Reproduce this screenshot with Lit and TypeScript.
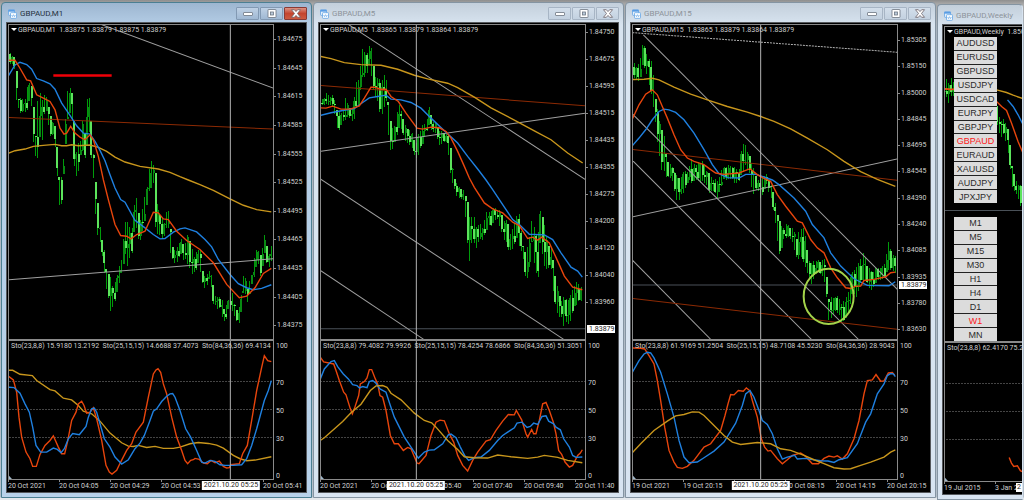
import { LitElement, html, svg, css, nothing } from "lit";
import { customElement, property } from "lit/decorators.js";
import { classMap } from "lit/directives/class-map.js";

type Line = { tone: string; pts: string };

interface Chart {
  title: string;
  quote: string;
  active?: boolean;
  partial?: boolean;
  left: number; // screen x that candle positions are counted from
  view: string; // price pane coordinates, three units to a pixel
  subView: string;
  candles: number[]; // x, high, low triples
  lines: Line[];
  studies: Line[];
  stochastic: string;
  prices: string[];
  pricePad: [number, number];
  last?: { value: string; at: number };
  dates: string[];
  cross?: { x: number; label: string };
  circle?: boolean;
}

const M1: Chart = {
  title: "GBPAUD,M1",
  quote: "1.83875 1.83879 1.83875 1.83879",
  active: true,
  left: 0,
  view: "27 75 792 945",
  subView: "27 21 792 414",
  candles: [
    8,41,68, 10,52,65, 13,56,65, 15,57,74, 17,73,107, 19,102,109, 21,98,115, 24,99,114, 26,96,110, 28,82,112, 30,81,100,
    32,84,114, 34,112,148, 36,137,158, 38,92,166, 40,93,145, 42,98,143, 44,92,117, 46,95,108, 48,103,126, 50,110,135,
    52,118,138, 54,126,133, 56,124,163, 58,155,195, 60,188,210, 62,172,205, 64,153,170, 66,115,146, 68,88,118, 70,84,115,
    72,93,112, 73,93,160, 75,130,182, 77,155,174, 79,140,172, 81,140,155, 83,115,158, 85,135,158, 87,97,150, 89,90,130,
    90,98,150, 92,130,170, 94,158,181, 96,180,222, 98,205,240, 100,226,245, 102,238,255, 104,247,272, 106,268,289,
    108,270,300, 110,272,312, 112,287,310, 114,283,306, 116,276,302, 118,276,290, 120,260,280, 122,258,272, 124,234,266,
    126,217,260, 128,217,267, 130,228,260, 132,228,258, 134,202,240, 136,196,225, 138,210,240, 140,218,245, 142,215,240,
    144,202,228, 146,190,215, 148,180,200, 150,163,190, 152,158,195, 154,165,180, 156,175,240, 158,205,238, 160,212,240,
    162,218,238, 164,224,238, 166,210,232, 168,208,225, 170,220,250, 172,244,260, 174,247,262, 176,255,269, 178,238,262,
    180,243,255, 182,238,256, 184,245,265, 186,240,262, 188,235,265, 190,240,270, 192,245,278, 194,258,276, 196,252,272,
    198,250,262, 200,243,270, 202,268,285, 204,275,288, 206,276,290, 208,273,282, 210,270,280, 212,275,296, 214,290,308,
    216,298,306, 218,295,312, 220,298,310, 222,300,318, 224,308,322, 226,306,323, 228,301,312, 230,298,310, 232,290,310,
    234,300,316, 236,308,322, 238,310,326, 240,305,322, 242,288,308, 244,268,290, 246,282,300, 248,290,303, 250,278,295,
    252,275,285, 254,258,282, 256,248,268, 258,250,262, 260,256,278, 262,250,280, 264,235,250, 266,235,260, 268,256,270,
    270,250,268, 272,244,262,
  ],
  lines: [
    { tone: "trend", pts: "300,72 820,265" },
    { tone: "trend", pts: "25,841 820,778" },
    { tone: "rust", pts: "25,353 820,388" },
    { tone: "gold", pts: "25,461 45,453 75,448 100,440 130,437 165,434 185,438 200,438 215,435 235,438 270,436 295,443 320,455 345,472 375,487 420,500 475,508 510,518 540,531 565,541 600,555 640,572 690,598 730,617 770,630 814,637" },
    { tone: "blue", pts: "25,228 45,195 60,187 80,194 95,208 110,236 130,243 150,252 165,268 185,310 210,347 230,378 250,400 270,403 285,425 300,452 315,483 330,525 345,565 362,600 375,608 405,662 435,685 460,705 480,718 495,717 520,698 540,688 555,685 590,697 615,720 635,742 655,780 690,825 715,853 740,865 760,871 785,867 814,856" },
    { tone: "red", pts: "25,181 45,181 60,205 80,240 92,243 110,285 130,295 150,305 165,330 180,385 192,403 200,400 212,380 225,400 240,412 255,420 270,405 280,420 295,470 310,540 325,600 345,675 362,708 380,710 393,718 410,705 435,695 460,638 475,640 490,658 505,660 530,695 560,723 600,750 640,790 680,855 718,895 740,890 765,865 790,822 814,807" },
    { tone: "mark", pts: "160,227 335,227" },
  ],
  studies: [
    { tone: "gold", pts: "25,109 38,109 60,121 97,125 110,140 150,167 165,171 190,193 215,198 235,215 250,232 275,240 300,262 330,298 365,327 385,337 400,338 415,335 440,341 465,338 490,344 520,344 540,340 570,330 595,326 625,329 650,334 670,343 700,365 720,375 740,381 765,379 814,369" },
    { tone: "red", pts: "25,127 40,138 50,175 57,250 65,310 78,355 90,375 98,398 109,398 120,362 135,335 150,320 160,306 175,340 185,360 194,360 203,322 215,260 228,235 235,210 245,202 252,215 260,238 270,235 280,222 290,255 305,320 318,395 328,415 336,421 350,410 362,385 380,350 395,330 408,295 430,265 445,190 460,120 468,108 474,104 482,115 490,150 500,180 515,250 530,310 545,350 555,380 563,390 572,380 580,378 585,374 598,377 610,388 622,390 633,380 645,387 658,382 670,398 680,403 688,402 692,393 718,390 728,360 742,335 755,260 770,170 785,100 793,65 803,80 814,83" },
    { tone: "blue", pts: "25,160 42,161 60,178 75,210 88,235 98,280 108,335 122,355 140,355 160,343 172,347 183,357 193,345 205,315 218,299 238,303 248,290 258,278 265,250 275,225 283,223 290,235 300,270 313,315 330,340 345,370 365,391 385,378 405,345 420,328 433,305 448,265 460,232 470,225 485,203 500,187 510,180 518,179 525,190 540,230 557,285 572,310 590,350 605,385 615,388 630,380 645,383 660,393 675,395 700,395 725,393 740,375 755,335 770,285 793,200 805,170 814,140" },
  ],
  stochastic: "Sto(23,8,8) 15.9180 13.2192  Sto(25,15,15) 14.6688 37.4073  Sto(84,36,36) 69.4134",
  prices: ["1.84675", "1.84645", "1.84615", "1.84585", "1.84555", "1.84525", "1.84495", "1.84465", "1.84435", "1.84405", "1.84375"],
  pricePad: [11, 10],
  dates: ["20 Oct 2021", "20 Oct 04:05", "20 Oct 04:29", "20 Oct 04:53", "", "20 Oct 05:41"],
  cross: { x: 691, label: "2021.10.20 05:25" },
};

const M5: Chart = {
  title: "GBPAUD,M5",
  quote: "1.83865 1.83879 1.83864 1.83879",
  left: 312,
  view: "30 75 792 945",
  subView: "30 21 792 414",
  candles: [
    321,100,106, 325,98,106, 328,92,106, 331,96,105, 334,95,107, 337,102,122, 339,112,133, 344,113,124, 347,96,120,
    350,107,117, 354,108,125, 357,78,110, 360,80,108, 364,43,75, 367,57,80, 370,43,68, 373,50,78, 375,70,95, 378,78,103,
    381,77,112, 384,74,118, 387,76,100, 389,92,131, 392,125,155, 395,128,150, 398,112,135, 401,101,128, 404,118,137,
    407,125,142, 410,129,145, 414,133,153, 417,145,159, 420,130,158, 424,125,143, 427,123,135, 430,107,128, 434,120,132,
    437,124,135, 440,128,146, 444,132,144, 447,133,142, 450,135,158, 452,150,180, 455,178,190, 459,184,198, 462,189,200,
    465,190,203, 468,196,232, 470,215,273, 474,212,240, 477,226,250, 480,222,243, 484,228,240, 487,212,234, 490,212,228,
    494,208,225, 498,208,220, 502,212,230, 505,219,243, 509,221,250, 512,234,252, 515,225,252, 518,213,238, 520,214,248,
    524,243,260, 527,255,280, 530,236,280, 533,221,245, 535,225,264, 539,235,287, 542,203,240, 545,222,268, 549,240,275,
    552,248,268, 555,262,302, 559,290,320, 562,300,315, 565,298,330, 569,298,325, 572,295,322, 575,283,312, 579,282,303,
    584,287,303,
  ],
  lines: [
    { tone: "trend", pts: "28,455 822,340" },
    { tone: "trend", pts: "110,72 822,539" },
    { tone: "trend", pts: "28,538 758,1020" },
    { tone: "trend", pts: "28,813 338,1020" },
    { tone: "rust", pts: "28,257 822,318" },
    { tone: "gold", pts: "28,169 60,176 100,188 150,194 210,196 260,208 310,226 350,237 410,250 440,263 490,292 540,324 620,366 670,393 720,420 770,460 815,490" },
    { tone: "blue", pts: "28,347 60,339 95,332 130,326 155,308 175,294 200,290 225,286 240,298 270,300 300,308 330,325 360,355 400,393 440,430 470,470 500,508 525,541 545,570 575,615 605,660 625,675 655,704 700,706 725,720 750,760 780,803 800,815 814,833" },
    { tone: "red", pts: "28,324 45,325 65,319 90,328 118,328 145,318 160,295 180,262 190,262 210,268 225,268 240,290 262,305 285,340 318,385 335,388 360,382 385,384 405,395 420,415 440,455 460,500 475,535 490,563 520,610 545,628 575,640 605,668 625,678 650,717 665,713 680,722 692,713 715,730 740,785 760,830 785,863 814,871" },
  ],
  studies: [
    { tone: "red", pts: "28,70 38,84 68,90 75,110 85,140 98,175 105,183 118,225 124,240 130,225 143,185 148,150 160,143 168,132 175,107 182,107 193,135 200,150 207,185 215,190 225,230 238,305 250,330 262,330 277,350 290,341 300,345 318,388 324,390 345,365 360,305 375,265 387,259 400,261 415,300 428,325 440,365 455,395 470,412 485,380 500,355 525,322 538,318 555,290 575,262 592,242 610,243 616,230 632,258 645,300 650,310 662,287 668,300 675,300 685,260 695,210 705,206 715,230 727,265 735,300 743,350 752,362 762,385 775,400 785,395 800,365 808,358 814,348" },
    { tone: "blue", pts: "28,135 40,105 60,83 70,80 80,98 97,120 112,135 125,152 138,155 145,162 155,158 168,161 175,143 185,140 195,148 207,165 225,175 238,215 250,250 265,280 280,310 300,340 322,373 340,355 355,349 370,348 395,330 412,303 420,301 435,312 448,340 462,367 473,380 490,372 510,370 535,350 560,320 575,305 590,295 610,282 618,268 633,265 648,281 658,278 668,268 680,272 693,248 705,246 713,262 728,270 735,280 748,288 758,315 775,340 785,365 795,371 814,370" },
    { tone: "gold", pts: "28,320 40,312 95,263 120,237 150,211 178,170 195,156 215,155 228,160 240,178 270,198 310,238 340,260 362,267 375,280 410,320 440,347 460,369 490,372 530,373 560,364 600,369 650,374 680,370 700,365 740,371 770,380 814,387" },
  ],
  stochastic: "Sto(23,8,8) 79.4082 79.9926  Sto(25,15,15) 78.4254 78.6866  Sto(84,36,36) 51.3051",
  prices: ["1.84750", "1.84675", "1.84595", "1.84515", "1.84435", "1.84355", "1.84275", "1.84200", "1.84120", "1.84040", "1.83960"],
  pricePad: [4, 33],
  last: { value: "1.83879", at: 988 },
  dates: ["20 Oct 2021", "20 Oct 03:40", "20 Oct 05:40", "20 Oct 07:40", "20 Oct 09:40", "20 Oct 11:40"],
  cross: { x: 316, label: "2021.10.20 05:25" },
};

const M15: Chart = {
  title: "GBPAUD,M15",
  quote: "1.83865 1.83879 1.83864 1.83879",
  left: 624,
  view: "27 75 792 945",
  subView: "27 21 792 414",
  candles: [
    632,58,77, 636,65,80, 638,66,85, 641,55,76, 643,40,64, 647,53,78, 650,56,88, 653,69,108, 656,100,130, 659,117,152,
    662,124,176, 665,142,178, 667,158,177, 671,165,180, 674,168,188, 678,178,206, 682,173,196, 686,170,188, 689,170,183,
    692,157,183, 696,166,182, 699,160,185, 702,160,182, 706,167,187, 709,173,193, 712,178,192, 716,180,196, 718,180,199,
    721,172,190, 724,166,182, 727,165,180, 732,165,181, 736,168,184, 739,168,183, 742,145,178, 745,140,165, 747,152,170,
    751,157,180, 753,165,197, 757,178,190, 761,180,200, 764,174,192, 767,174,186, 771,183,199, 774,195,217, 777,210,238,
    780,223,258, 784,227,242, 787,223,237, 791,227,242, 794,230,248, 797,237,259, 800,230,264, 803,222,262, 807,247,275,
    811,265,286, 814,260,280, 817,260,274, 821,262,275, 824,255,280, 827,278,303, 829,298,322, 832,298,318, 836,295,314,
    839,298,314, 843,303,330, 845,300,320, 848,290,315, 851,273,305, 854,268,293, 857,267,300, 861,256,288, 864,253,280,
    867,263,285, 870,270,293, 874,270,288, 877,268,284, 881,267,280, 884,266,281, 887,250,276, 889,242,270, 892,252,272,
    896,258,277,
  ],
  lines: [
    { tone: "dots", pts: "25,98 820,157" },
    { tone: "trend", pts: "58,105 820,870" },
    { tone: "trend", pts: "25,342 703,1020" },
    { tone: "trend", pts: "25,482 562,1020" },
    { tone: "trend", pts: "25,782 260,1020" },
    { tone: "trend", pts: "25,652 820,478" },
    { tone: "rust", pts: "25,449 820,542" },
    { tone: "rust", pts: "25,897 820,990" },
    { tone: "gold", pts: "25,239 60,238 85,235 105,240 150,262 200,283 250,300 310,320 370,337 410,350 450,365 500,387 550,415 610,450 660,485 710,516 760,539 814,560" },
    { tone: "blue", pts: "25,438 45,415 65,390 85,360 105,335 120,328 135,330 155,338 180,360 210,400 240,450 265,495 285,522 310,534 345,535 365,524 395,524 420,532 445,541 465,555 510,595 545,635 565,675 600,715 620,760 650,800 690,838 730,858 795,859 814,847" },
    { tone: "red", pts: "25,358 45,315 65,283 85,270 100,285 115,320 130,355 150,405 170,450 190,475 210,485 240,495 260,510 275,520 300,524 345,520 378,507 400,525 420,536 440,545 460,585 485,620 520,665 535,670 560,720 580,745 600,760 620,805 640,835 665,865 680,867 695,860 710,860 720,843 750,840 785,832 800,820 814,818" },
  ],
  studies: [
    { tone: "red", pts: "25,42 50,43 62,45 75,65 90,90 100,140 110,200 122,280 135,350 150,385 160,401 175,404 190,398 210,380 240,340 260,330 290,290 303,245 312,210 320,182 330,183 343,170 358,172 367,162 377,170 385,200 400,250 412,315 422,340 432,352 440,350 460,375 475,390 490,378 505,365 530,358 545,368 565,390 583,390 600,374 615,367 630,370 640,366 655,376 670,360 690,315 705,260 720,180 730,140 745,138 756,122 770,142 780,141 793,117 805,116 812,124" },
    { tone: "blue", pts: "25,115 45,80 60,60 70,55 80,57 90,72 110,115 130,180 150,250 165,320 180,370 195,387 220,385 240,372 270,352 300,325 335,268 355,215 365,180 378,170 390,190 405,230 415,260 430,272 445,300 460,345 475,376 490,370 512,365 520,376 545,374 560,377 590,381 612,382 630,386 645,378 670,372 700,330 725,265 740,240 760,180 780,150 790,125 800,119 808,120 814,128" },
    { tone: "gold", pts: "25,357 50,330 90,290 130,262 155,246 180,242 205,234 225,235 240,245 270,275 300,305 325,325 350,332 400,326 440,330 470,345 500,350 540,365 570,378 600,390 630,402 660,406 680,405 710,395 740,385 780,370 800,355 814,348" },
  ],
  stochastic: "Sto(23,8,8) 61.9169 51.2504  Sto(25,15,15) 48.7108 45.5230  Sto(84,36,36) 28.9043",
  prices: ["1.85305", "1.85150", "1.85000", "1.84845", "1.84695", "1.84545", "1.84390", "1.84240", "1.84085", "1.83935", "1.83780", "1.83630"],
  pricePad: [12, 6],
  last: { value: "1.83879", at: 857 },
  dates: ["19 Oct 2021", "19 Oct 20:15", "", "20 Oct 08:15", "20 Oct 14:15", "20 Oct 20:15"],
  cross: { x: 410, label: "2021.10.20 05:25" },
  circle: true,
};

const WEEKLY: Chart = {
  title: "GBPAUD,Weekly",
  quote: "1.85010 1.85240",
  partial: true,
  left: 930,
  view: "43 81 234 945",
  subView: "43 21 234 414",
  candles: [
    944,80,103, 946,78,98, 948,80,107, 951,78,98, 953,82,95, 956,70,90, 962,60,80, 970,78,90, 978,95,110, 988,100,120,
    994,104,118, 998,105,128, 1001,122,142, 1004,118,134, 1007,122,146, 1010,140,172, 1013,168,190, 1016,180,194,
    1018,182,200, 1022,186,208,
  ],
  lines: [
    { tone: "gold", pts: "40,266 60,269 120,268 200,270 230,278 250,286 282,297" },
    { tone: "red", pts: "40,267 60,269 80,267 200,305 215,320 230,332 245,370 265,425 282,465" },
    { tone: "blue", pts: "233,300 250,320 265,345 282,378" },
  ],
  studies: [{ tone: "red", pts: "238,365 245,382 252,392 263,390 272,405 282,410" }],
  stochastic: "Sto(23,8,8) 62.4170 75.2",
  prices: [],
  pricePad: [0, 0],
  last: { value: "", at: 633 },
  dates: ["19 Jul 2015", "3 Jan 2016"],
};

const SYMBOLS = ["AUDUSD", "EURUSD", "GBPUSD", "USDJPY", "USDCAD", "EURJPY", "GBPJPY", "GBPAUD", "EURAUD", "XAUUSD", "AUDJPY", "JPXJPY"];
const FRAMES = ["M1", "M5", "M15", "M30", "H1", "H4", "D1", "W1", "MN"];

/* Resamples the high/low track at the bar pitch and derives a body for each bar. */
function bars(c: Chart) {
  const k = c.candles;
  const out = [];
  let i = 0;
  let prev = (k[1] + k[2]) / 2;
  for (let n = 0, x = k[0]; x <= k[k.length - 3]; n++, x = k[0] + n * 2.14) {
    while (i + 5 < k.length && k[i + 3] < x) i += 3;
    const t = Math.min(1, (x - k[i]) / (k[i + 3] - k[i] || 1));
    let hi = k[i + 1] + (k[i + 4] - k[i + 1]) * t;
    let lo = k[i + 2] + (k[i + 5] - k[i + 2]) * t;
    const span = lo - hi;
    hi += span * 0.06 * ((n * 7) % 3);
    lo -= span * 0.05 * ((n * 5) % 4);
    const swing = 0.5 + 0.42 * Math.sin(n * 2.3);
    const close = hi + (lo - hi) * swing;
    const open = Math.min(lo, Math.max(hi, prev));
    const down = close > open;
    prev = close;
    const px = (x - c.left) * 3;
    const top = Math.min(open, close) * 3;
    const h = Math.max(3, Math.abs(close - open) * 3);
    out.push(svg`<path class="wick" d="M${px} ${hi * 3}V${lo * 3}"/><path class=${down ? "down" : "up"} d="M${px} ${top}v${h}"/>`);
  }
  return out;
}

const poly = (l: Line) => svg`<polyline class=${l.tone} points=${l.pts} />`;

@customElement("terminal-chart")
export class TerminalChart extends LitElement {
  @property({ attribute: false }) chart!: Chart;

  static styles = css`
    :host { display: block; min-width: 0; min-height: 0; }
    * { box-sizing: border-box; }
    .window {
      height: 100%; display: flex; flex-direction: column; padding: 0 4px 4px;
      border: 1px solid #8494a2; border-radius: 4px 4px 0 0;
      background: linear-gradient(#c3cfdb, #d8e4f0 22px, #d8e4f1);
      font: 7px/8px Roboto, "Liberation Sans", sans-serif; color: #d0d0d0;
    }
    .window.active { border-color: #4b7f92; background: linear-gradient(#9db6d0, #b4cde6 22px, #b8d2ea); }
    .window.partial { padding-right: 0; border-right-color: #d8e4f1; }
    header { height: 19px; flex: none; display: flex; align-items: center; gap: 3px; padding: 3px 0 0 2px; }
    .app { width: 9px; height: 10px; flex: none; }
    h2 { margin: 0; flex: 1; font: 8px/10px Roboto, "Liberation Sans", sans-serif; color: #8d949b; white-space: nowrap; }
    .active h2 { color: #26323e; }
    .controls { display: flex; gap: 1px; margin-top: -2px; }
    .controls button {
      width: 23px; height: 13px; padding: 0; border: 1px solid #a7b5c5; border-radius: 1px;
      background: linear-gradient(#d3dfeb, #c3d1e0); display: grid; place-items: center;
    }
    .active .controls button { border-color: #8299b3; background: linear-gradient(#bfd1e5, #9fb8d3); }
    .active .controls .close { border-color: #8a3a35; background: linear-gradient(#dd9384, #c4452f 50%, #cc5a40); }
    .controls svg { width: 12px; height: 9px; }
    .chart {
      flex: 1; min-height: 0; display: grid; background: #000; border: 1px solid #55585c; padding: 1px 0 0 1px;
      grid-template-columns: minmax(0, 1fr) 32px; grid-template-rows: minmax(0, 316fr) 2px minmax(0, 139fr) 12px;
    }
    .partial .chart { grid-template-columns: minmax(0, 1fr); border-right: 0; }
    .pane { display: grid; grid-template: minmax(0, 1fr) / minmax(0, 1fr); position: relative; overflow: hidden;
      border: solid #8a8a8a; border-width: 1px 1px 0; }
    .pane.sub { border-width: 0 1px 1px; }
    .partial .pane { border-right: 0; }
    .pane > * { grid-area: 1 / 1; }
    .plot { width: 100%; height: 100%; display: block; }
    .split { grid-column: 1; background: #8a8a8a; }
    .caption { padding: 0 0 0 9px; white-space: pre; align-self: start; margin-top: 1px; position: relative; }
    .caption::before { content: ""; position: absolute; left: 2px; top: 2px; border: solid transparent; border-width: 3px 3px 0; border-top-color: #fff; }
    .reading { padding: 1px 0 0 2px; white-space: pre; align-self: start; }
    .prices { display: flex; flex-direction: column; justify-content: space-between; position: relative; }
    .prices span { padding-left: 3px; position: relative; }
    .prices span::before { content: ""; position: absolute; left: 0; top: 4px; width: 2px; height: 1px; background: #8a8a8a; }
    .last { position: absolute; left: 1px; background: #fff; color: #222; padding: 0 1px 0 2px; font-weight: 400; transform: translateY(-50%); }
    .levels { display: grid; grid-template-rows: 27fr 28fr 28fr 28fr 27fr; align-items: center; padding: 1px 0 0 2px; }
    .levels :first-child { align-self: start; }
    .levels :last-child { align-self: end; }
    .dates { grid-column: 1 / -1; display: flex; position: relative; white-space: nowrap; }
    .dates time { flex: 0 0 51px; width: 51px; position: relative; padding-top: 2px; }
    .partial .dates { overflow: hidden; }
    .dates time::before { content: ""; position: absolute; left: 0; top: 0; width: 1px; height: 2px; background: #8a8a8a; }
    .when { position: absolute; top: 1px; background: #fff; color: #222; padding: 0 2px 1px; font-weight: 400; transform: translateX(-50%); }
    .stub { position: absolute; right: 0; top: 1px; background: #fff; color: #222; padding: 0 1px 1px; }
    .plot polyline, .plot path, .plot ellipse { vector-effect: non-scaling-stroke; fill: none; }
    .bars { shape-rendering: crispEdges; }
    .wick { stroke: #009c0a; stroke-width: 1px; }
    .up { stroke: #078a12; stroke-width: 2px; }
    .down { stroke: #5ce45c; stroke-width: 2px; }
    .trend { stroke: #a0a0a0; stroke-width: 1px; }
    .dots { stroke: #b0b0b0; stroke-width: 1px; stroke-dasharray: 2 1; }
    .rust { stroke: #8c2a04; stroke-width: 1px; }
    .gold { stroke: #c8961c; stroke-width: 1.4px; }
    .blue { stroke: #1f80e0; stroke-width: 1.4px; }
    .red { stroke: #e8450c; stroke-width: 1.4px; }
    .mark { stroke: #f00008; stroke-width: 2.6px; }
    .ring { stroke: #a3d34a; stroke-width: 2px; }
    .cross { stroke: #b4b4b4; stroke-width: 1px; }
    .bid { stroke: #4a5158; stroke-width: 1px; }
    .level { stroke: #444; stroke-width: 1px; stroke-dasharray: 2 1; shape-rendering: crispEdges; }
    .corner { fill: #9fb8cc; }
    .panel { display: flex; flex-direction: column; gap: 14px; width: 43px; margin: 10px 0 0 9px; position: relative; }
    .group { display: grid; grid-auto-rows: 1fr; gap: 1px; background: #222; }
    .symbols { height: 166px; }
    .frames { height: 124px; }
    .group button { border: 0; padding: 0; min-height: 0; background: #dcdcdc; color: #2c2c2c; font: 9px/12px "Liberation Sans", Arial, sans-serif; overflow: hidden; }
    .group .on { color: #ff1a1a; }
  `;

  private group(kind: string, names: string[], on: string) {
    return html`<div class="group ${kind}">
      ${names.map((n) => html`<button type="button" class=${classMap({ on: n === on })}>${n}</button>`)}
    </div>`;
  }

  private controls() {
    return html`<div class="controls">
      <button type="button" aria-label="Minimize">
        <svg viewBox="0 0 12 9"><rect x="1.5" y="3.5" width="9" height="3" rx=".5" fill="#fff" stroke="#6c7580" stroke-width=".8" /></svg>
      </button>
      <button type="button" aria-label="Maximize">
        <svg viewBox="0 0 12 9"><rect x="2" y=".5" width="8" height="8" rx=".5" fill="#fff" stroke="#6c7580" stroke-width=".8" /><rect x="4.5" y="3" width="3" height="3" fill="#b9c9da" stroke="#6c7580" stroke-width=".8" /></svg>
      </button>
      <button type="button" class="close" aria-label="Close">
        <svg viewBox="0 0 12 9"><polygon points="1.5,.7 4.3,.7 6,2.6 7.7,.7 10.5,.7 7.5,4.5 10.5,8.3 7.7,8.3 6,6.4 4.3,8.3 1.5,8.3 4.5,4.5" fill="#fff" stroke="#6c6268" stroke-width=".8" /></svg>
      </button>
    </div>`;
  }

  render() {
    const c = this.chart;
    const [x0, y0, w, h] = c.view.split(" ").map(Number);
    const crossAt = c.cross ? svg`<path class="cross" d="M${c.cross.x} 0V1100" />` : nothing;
    return html`<section class=${classMap({ window: true, active: !!c.active, partial: !!c.partial })}>
      <header>
        <svg class="app" viewBox="0 0 27 30" aria-hidden="true">
          <rect x="1.5" y="3" width="18" height="16" rx="2" fill="#e6f1fc" stroke="#6aa8e6" stroke-width="2.5" />
          <rect x="1" y="2" width="19" height="6" fill="#5a9de4" />
          <rect x="7.5" y="11" width="18" height="17" rx="2" fill="#fafdff" stroke="#6aa8e6" stroke-width="2.5" />
          <polyline points="11,18 13.5,23 16.5,17 19.500,23 22,18" fill="none" stroke="#6aa8e6" stroke-width="2" />
        </svg>
        <h2>${c.title}</h2>
        ${c.partial ? nothing : this.controls()}
      </header>
      <div class="chart">
        <div class="pane">
          <svg class="plot" viewBox=${c.view} preserveAspectRatio="none">
            ${c.last ? svg`<path class="bid" d="M0 ${c.last.at}H900" />` : nothing}
            <g class="bars">${bars(c)}</g>
            ${c.lines.map(poly)} ${crossAt}
            ${c.circle ? svg`<ellipse class="ring" cx="614" cy="891" rx="75" ry="83" />` : nothing}
          </svg>
          <div class="caption">${c.title}  ${c.quote}</div>
          ${c.partial
            ? html`<div class="panel">${this.group("symbols", SYMBOLS, "GBPAUD")}${this.group("frames", FRAMES, "W1")}</div>`
            : nothing}
        </div>
        ${c.partial
          ? nothing
          : html`<div class="prices" style="padding-top:${c.pricePad[0]}px;padding-bottom:${c.pricePad[1]}px">
              ${c.prices.map((p) => html`<span>${p}</span>`)}
              ${c.last ? html`<b class="last" style="top:${((c.last.at - y0) / h) * 100}%">${c.last.value}</b>` : nothing}
            </div>`}
        <div class="split"></div>
        ${c.partial ? nothing : html`<div></div>`}
        <div class="pane sub">
          <svg class="plot" viewBox=${c.subView} preserveAspectRatio="none">
            ${[143, 227, 310].map((y) => svg`<path class="level" d="M0 ${y}H900" />`)}
            ${c.studies.map(poly)} ${crossAt}
            <polygon class="corner" points="${x0},426 ${x0 + 9},436 ${x0},436" />
          </svg>
          <div class="reading">${c.stochastic}</div>
        </div>
        ${c.partial
          ? nothing
          : html`<div class="levels">${[100, 70, 50, 30, 0].map((n) => html`<span>${n}</span>`)}</div>`}
        <div class="dates">
          ${c.dates.map((d) => html`<time>${d}</time>`)}
          ${c.cross ? html`<b class="when" style="left:calc((100% - 32px) * ${(c.cross.x - x0) / w})">${c.cross.label}</b>` : nothing}
          ${c.partial ? html`<span class="stub">2</span>` : nothing}
        </div>
      </div>
    </section>`;
  }
}

@customElement("app-root")
export class AppRoot extends LitElement {
  static styles = css`
    :host { display: block; }
    .desktop {
      box-sizing: border-box; height: 100vh; padding: 2px 1px 0; display: grid; column-gap: 1px;
      grid-template-columns: minmax(0, 311fr) minmax(0, 311fr) minmax(0, 311fr) minmax(0, 86fr);
      grid-template-rows: minmax(0, 1fr);
      background: linear-gradient(#8e8e8e, #a8a8a8 4px, #a9b4bf 30px, #b4bfca 497px, #e4e8ec 498px);
    }
    .full { margin-bottom: 2px; }
    .edge { margin-top: 2px; }
  `;

  render() {
    return html`<main class="desktop">
      ${[M1, M5, M15].map((c) => html`<terminal-chart class="full" .chart=${c}></terminal-chart>`)}
      <terminal-chart class="edge" .chart=${WEEKLY}></terminal-chart>
    </main>`;
  }
}
